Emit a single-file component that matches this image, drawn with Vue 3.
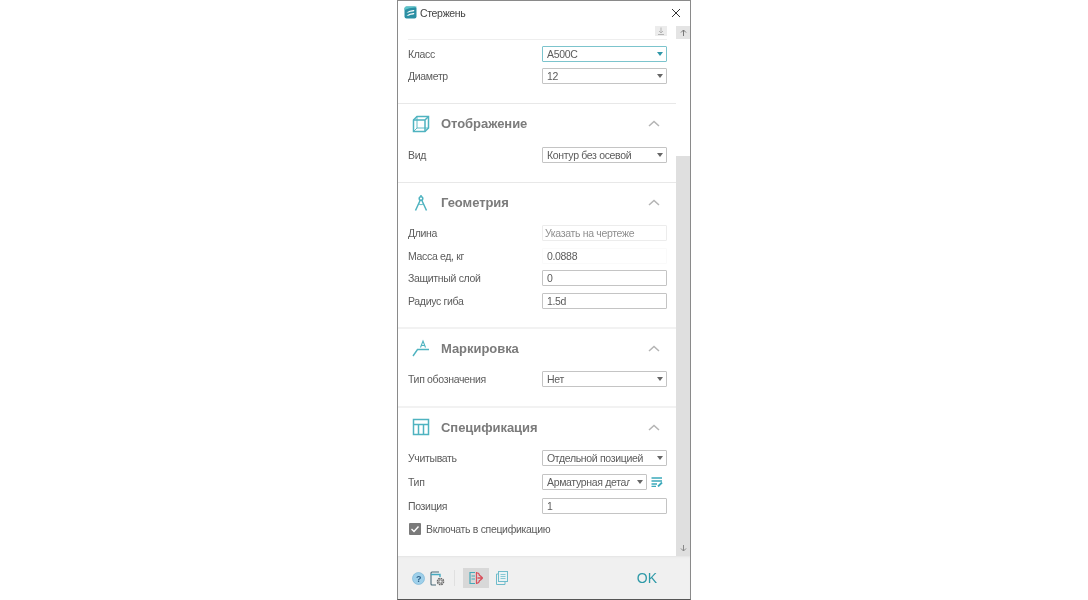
<template>
  <div class="window">
    <div class="title-bar">
      <svg class="logo" width="13" height="13" viewBox="0 0 13 13">
        <rect x="0.5" y="0.5" width="12" height="12" rx="2" fill="#2b8fa3" />
        <path d="M0.5 4 Q6 1 12.5 1.5 V0.5 H2.5 Q0.5 0.5 0.5 2.5Z" fill="#5cc4c9" />
        <path d="M2.5 6.5 Q6 3.6 10.5 4 L9.5 5.4 Q6.5 5.2 4.5 6.6Z" fill="#fff" />
        <path d="M2.5 9.6 Q6 6.7 10.5 7 L9.5 8.4 Q6.5 8.3 4.5 9.7Z" fill="#fff" />
      </svg>
      <span class="title">Стержень</span>
      <svg class="close" width="10" height="10" viewBox="0 0 10 10">
        <path d="M1 1 L9 9 M9 1 L1 9" stroke="#333" stroke-width="1" fill="none" />
      </svg>
    </div>

    <div class="middle">
      <div class="content">
        <div class="top-tools">
          <span class="tool-btn">
            <svg width="8" height="8" viewBox="0 0 8 8">
              <path d="M4 0.5 V6 M2 4 L4 6 L6 4 M1 7.5 H7" stroke="#b5b5b5" fill="none" />
            </svg>
          </span>
        </div>

        <div class="section first">
          <div class="fields">
            <div class="row">
              <label>Класс</label>
              <div class="select focused">А500С<i class="caret"></i></div>
            </div>
            <div class="row">
              <label>Диаметр</label>
              <div class="select">12<i class="caret"></i></div>
            </div>
          </div>
        </div>

        <div class="section s-view">
          <div class="head">
            <svg class="head-icon" width="18" height="18" viewBox="0 0 18 18" fill="none" stroke="#4fb3c0" stroke-width="1.5">
              <path d="M1.5 5 L5 1.5 H16.5 V13 L13 16.5 H1.5Z" />
              <path d="M1.5 5 H13 V16.5 M13 5 L16.5 1.5" />
              <path d="M5 1.5 V13 H16.5 M5 13 L1.5 16.5" stroke-width="0.9" />
            </svg>
            <span class="head-title">Отображение</span>
            <svg class="chevron" width="12" height="7" viewBox="0 0 12 7">
              <path d="M1 6 L6 1.5 L11 6" stroke="#b4b4b4" stroke-width="1.5" fill="none" />
            </svg>
          </div>
          <div class="fields">
            <div class="row">
              <label>Вид</label>
              <div class="select">Контур без осевой<i class="caret"></i></div>
            </div>
          </div>
        </div>

        <div class="section s-geom">
          <div class="head">
            <svg class="head-icon" width="18" height="18" viewBox="0 0 18 18" fill="none" stroke="#4fb3c0" stroke-width="1.5">
              <circle cx="9" cy="4.5" r="1.8" />
              <path d="M8.2 6.2 L3.5 16.5 M9.8 6.2 L14.5 16.5 M9 1 V2.7" />
              <path d="M6.5 10 Q9 11.5 11.5 10" stroke-width="0.9" />
            </svg>
            <span class="head-title">Геометрия</span>
            <svg class="chevron" width="12" height="7" viewBox="0 0 12 7">
              <path d="M1 6 L6 1.5 L11 6" stroke="#b4b4b4" stroke-width="1.5" fill="none" />
            </svg>
          </div>
          <div class="fields wide">
            <div class="row">
              <label>Длина</label>
              <div class="input pale placeholder">Указать на чертеже</div>
            </div>
            <div class="row">
              <label>Масса ед, кг</label>
              <div class="input readonly">0.0888</div>
            </div>
            <div class="row">
              <label>Защитный слой</label>
              <div class="input">0</div>
            </div>
            <div class="row">
              <label>Радиус гиба</label>
              <div class="input">1.5d</div>
            </div>
          </div>
        </div>

        <div class="section s-mark">
          <div class="head">
            <svg class="head-icon" width="18" height="18" viewBox="0 0 18 18" fill="none" stroke="#4fb3c0" stroke-width="1.4">
              <path d="M1 17 L5.5 10.5 H17" />
              <path d="M8.5 8.5 L11 2 L13.5 8.5 M9.5 6.5 H12.5" stroke-width="1.1" />
            </svg>
            <span class="head-title">Маркировка</span>
            <svg class="chevron" width="12" height="7" viewBox="0 0 12 7">
              <path d="M1 6 L6 1.5 L11 6" stroke="#b4b4b4" stroke-width="1.5" fill="none" />
            </svg>
          </div>
          <div class="fields">
            <div class="row">
              <label>Тип обозначения</label>
              <div class="select">Нет<i class="caret"></i></div>
            </div>
          </div>
        </div>

        <div class="section s-spec">
          <div class="head">
            <svg class="head-icon" width="18" height="18" viewBox="0 0 18 18" fill="none" stroke="#4fb3c0" stroke-width="1.5">
              <rect x="1.5" y="1.5" width="15" height="15" />
              <path d="M1.5 6.5 H16.5 M6.5 6.5 V16.5 M11.5 6.5 V16.5" />
            </svg>
            <span class="head-title">Спецификация</span>
            <svg class="chevron" width="12" height="7" viewBox="0 0 12 7">
              <path d="M1 6 L6 1.5 L11 6" stroke="#b4b4b4" stroke-width="1.5" fill="none" />
            </svg>
          </div>
          <div class="fields spec">
            <div class="row">
              <label>Учитывать</label>
              <div class="select">Отдельной позицией<i class="caret"></i></div>
            </div>
            <div class="row">
              <label>Тип</label>
              <div class="select short"><span class="clip">Арматурная деталь</span><i class="caret"></i></div>
              <svg class="list-icon" width="12" height="10" viewBox="0 0 12 10" fill="none" stroke="#3ba9bb" stroke-width="1.3">
                <path d="M0.5 1 H11 M0.5 4 H11 M0.5 7 H6 M0.5 9.5 H5" />
                <path d="M7 9.5 L11 5.5" stroke-width="1.8" />
              </svg>
            </div>
            <div class="row">
              <label>Позиция</label>
              <div class="input">1</div>
            </div>
            <div class="check-row">
              <span class="check">
                <svg width="12" height="12" viewBox="0 0 12 12">
                  <path d="M2.5 6 L5 8.5 L9.5 3.5" stroke="#fff" stroke-width="1.4" fill="none" />
                </svg>
              </span>
              <span>Включать в спецификацию</span>
            </div>
          </div>
        </div>
      </div>

      <div class="scrollbar">
        <div class="arrow-up">
          <svg width="7" height="7" viewBox="0 0 7 7">
            <path d="M3.5 7 V1 M1 3.5 L3.5 1 L6 3.5" stroke="#777" fill="none" />
          </svg>
        </div>
        <div class="track-top"></div>
        <div class="arrow-down">
          <svg width="7" height="7" viewBox="0 0 7 7">
            <path d="M3.5 0 V6 M1 3.5 L3.5 6 L6 3.5" stroke="#888" fill="none" />
          </svg>
        </div>
      </div>
    </div>

    <div class="footer">
      <svg class="f-help" width="13" height="13" viewBox="0 0 13 13">
        <circle cx="6.5" cy="6.5" r="6" fill="#9fd0ea" stroke="#6fb0d4" stroke-width="0.6" />
        <text x="6.5" y="9.8" text-anchor="middle" class="q">?</text>
      </svg>
      <svg class="f-set" width="15" height="15" viewBox="0 0 15 15" fill="none">
        <path d="M9 1 H2 A1 1 0 0 0 1 2 V13 A1 1 0 0 0 2 14 H6" stroke="#4a6a78" stroke-width="1.1" />
        <path d="M1 3.5 H10 V6" stroke="#45a9c0" stroke-width="1.4" />
        <circle cx="10.5" cy="10.5" r="3" stroke="#666" stroke-width="1.6" stroke-dasharray="1.6 0.7" />
        <circle cx="10.5" cy="10.5" r="1.6" stroke="#666" stroke-width="0.8" />
      </svg>
      <span class="f-sep"></span>
      <span class="f-active">
        <svg width="14" height="14" viewBox="0 0 14 14" fill="none">
          <path d="M6 1.5 H1 V12.5 H6" stroke="#45a9b8" stroke-width="1.2" />
          <path d="M2.5 5 H6 M2.5 8 H6" stroke="#45a9b8" />
          <path d="M7.5 1 V13 M7.5 1.5 Q10.5 2 10.5 5 M7.5 12.5 Q10.5 12 10.5 9" stroke="#d8505c" stroke-width="1.2" />
          <path d="M8.5 7 L13.5 7 M11 4.5 L13.5 7 L11 9.5" stroke="#d8505c" stroke-width="1.3" />
        </svg>
      </span>
      <svg class="f-copy" width="13" height="14" viewBox="0 0 13 14" fill="none" stroke="#6fbccb" stroke-width="1">
        <rect x="3.5" y="0.5" width="9" height="10" fill="#e8f3f5" />
        <path d="M3.5 3 H1.5 V13.5 H10 V10.5" />
        <path d="M5.5 3.5 H10.5 M5.5 5.5 H10.5 M5.5 7.5 H10.5" stroke-width="0.8" />
      </svg>
      <span class="ok">OK</span>
    </div>
  </div>
</template>

<script setup>
</script>

<style>
html,
body {
  background: #fff;
}
</style>

<style scoped>
.window {
  width: 294px;
  height: 600px;
  margin-left: 397px;
  box-sizing: border-box;
  border: 1px solid #8a8a8a;
  border-bottom-color: #555;
  display: flex;
  flex-direction: column;
  background: #fff;
  font-family: "Liberation Sans", Arial, sans-serif;
  font-size: 10.5px;
  letter-spacing: -0.33px;
  color: #5c5c5c;
  overflow: hidden;
  filter: blur(0.3px);
}
.title-bar {
  height: 25px;
  flex-shrink: 0;
  display: flex;
  align-items: center;
  padding: 0 9px 2px 6px;
  box-sizing: border-box;
}
.logo {
  margin-right: 3px;
}
.title {
  flex: 1;
  color: #444;
}
.middle {
  height: 530px;
  flex-shrink: 0;
  display: flex;
  overflow: hidden;
}
.content {
  width: 278px;
  flex-shrink: 0;
}
.top-tools {
  height: 13px;
  margin: 0 9px 0 10px;
  border-bottom: 1px solid #eee;
  display: flex;
  justify-content: flex-end;
}
.tool-btn {
  width: 12px;
  height: 10px;
  background: #ececec;
  display: flex;
  align-items: center;
  justify-content: center;
}
.section {
  border-top: 1px solid #e8e8e8;
}
.section.first {
  border-top: none;
  padding: 6px 0 19px;
}
.s-view {
  padding-bottom: 19px;
}
.s-view .fields {
  padding-top: 3px;
}
.s-geom {
  padding-bottom: 18px;
}
.s-mark {
  padding-bottom: 19px;
  border-top: 2px solid #f2f2f2;
}
.s-spec {
  border-top: 2px solid #f2f2f2;
}
.head {
  height: 40px;
  box-sizing: border-box;
  display: flex;
  align-items: center;
  padding: 0 16px 1px 14px;
}
.head-icon {
  margin-right: 11px;
}
.head-title {
  flex: 1;
  font-size: 13px;
  font-weight: bold;
  letter-spacing: -0.05px;
  color: #7b7b7b;
}
.fields {
  display: flex;
  flex-direction: column;
  gap: 6px;
  padding: 2px 9px 0 10px;
}
.first .fields {
  padding-top: 0;
}
.fields.wide {
  gap: 6.5px;
}
.fields.spec {
  gap: 8px;
}
.row {
  height: 16px;
  display: flex;
  align-items: center;
}
.row label {
  width: 134px;
  flex-shrink: 0;
}
.select,
.input {
  box-sizing: border-box;
  width: 125px;
  height: 16px;
  border: 1px solid #c4c4c4;
  border-radius: 1px;
  padding: 0 0 0 4px;
  line-height: 14px;
  color: #5c5c5c;
  position: relative;
  white-space: nowrap;
}
.select.focused {
  border-color: #7cc4cd;
}
.select.short {
  width: 105px;
}
.clip {
  display: block;
  width: 83px;
  overflow: hidden;
}
.caret {
  position: absolute;
  right: 3px;
  top: 5px;
  border-left: 3.5px solid transparent;
  border-right: 3.5px solid transparent;
  border-top: 4px solid #666;
}
.focused .caret {
  border-top-color: #2f97a8;
}
.list-icon {
  margin-left: 4px;
}
.input.pale {
  border-color: #ececec;
  padding-left: 2px;
}
.input.placeholder {
  color: #8f8f8f;
}
.input.readonly {
  border-color: #fafafa;
}
.check-row {
  display: flex;
  align-items: center;
  padding-left: 1px;
  margin-top: 1px;
}
.check {
  width: 12px;
  height: 12px;
  background: #7a7a7a;
  border-radius: 1px;
  margin-right: 5px;
  display: flex;
}
.scrollbar {
  width: 15px;
  flex-shrink: 0;
  display: flex;
  flex-direction: column;
  background: #dfdfdf;
}
.arrow-up {
  height: 13px;
  background: #e4e4e4;
  display: flex;
  align-items: center;
  justify-content: center;
}
.track-top {
  height: 117px;
  background: #fff;
}
.arrow-down {
  margin-top: auto;
  height: 15px;
  display: flex;
  align-items: center;
  justify-content: center;
}
.footer {
  flex: 1;
  background: #f0f0f0;
  box-shadow: inset 0 2px 2px -1px #e4e4e4;
  display: flex;
  align-items: center;
  padding: 1px 0 0 14px;
}
.f-set {
  margin-left: 5px;
}
.f-sep {
  width: 1px;
  height: 16px;
  background: #e0e0e0;
  margin: 0 8px 0 9px;
}
.f-active {
  width: 26px;
  height: 20px;
  background: #d8d8d8;
  display: flex;
  align-items: center;
  justify-content: center;
}
.f-copy {
  margin-left: 6px;
}
.ok {
  margin-left: auto;
  margin-right: 33px;
  font-size: 14px;
  letter-spacing: 0;
  color: #2f9aa8;
}
.q {
  font-family: "Liberation Sans", Arial, sans-serif;
  font-size: 9px;
  font-weight: bold;
  fill: #2c5f88;
}
</style>
